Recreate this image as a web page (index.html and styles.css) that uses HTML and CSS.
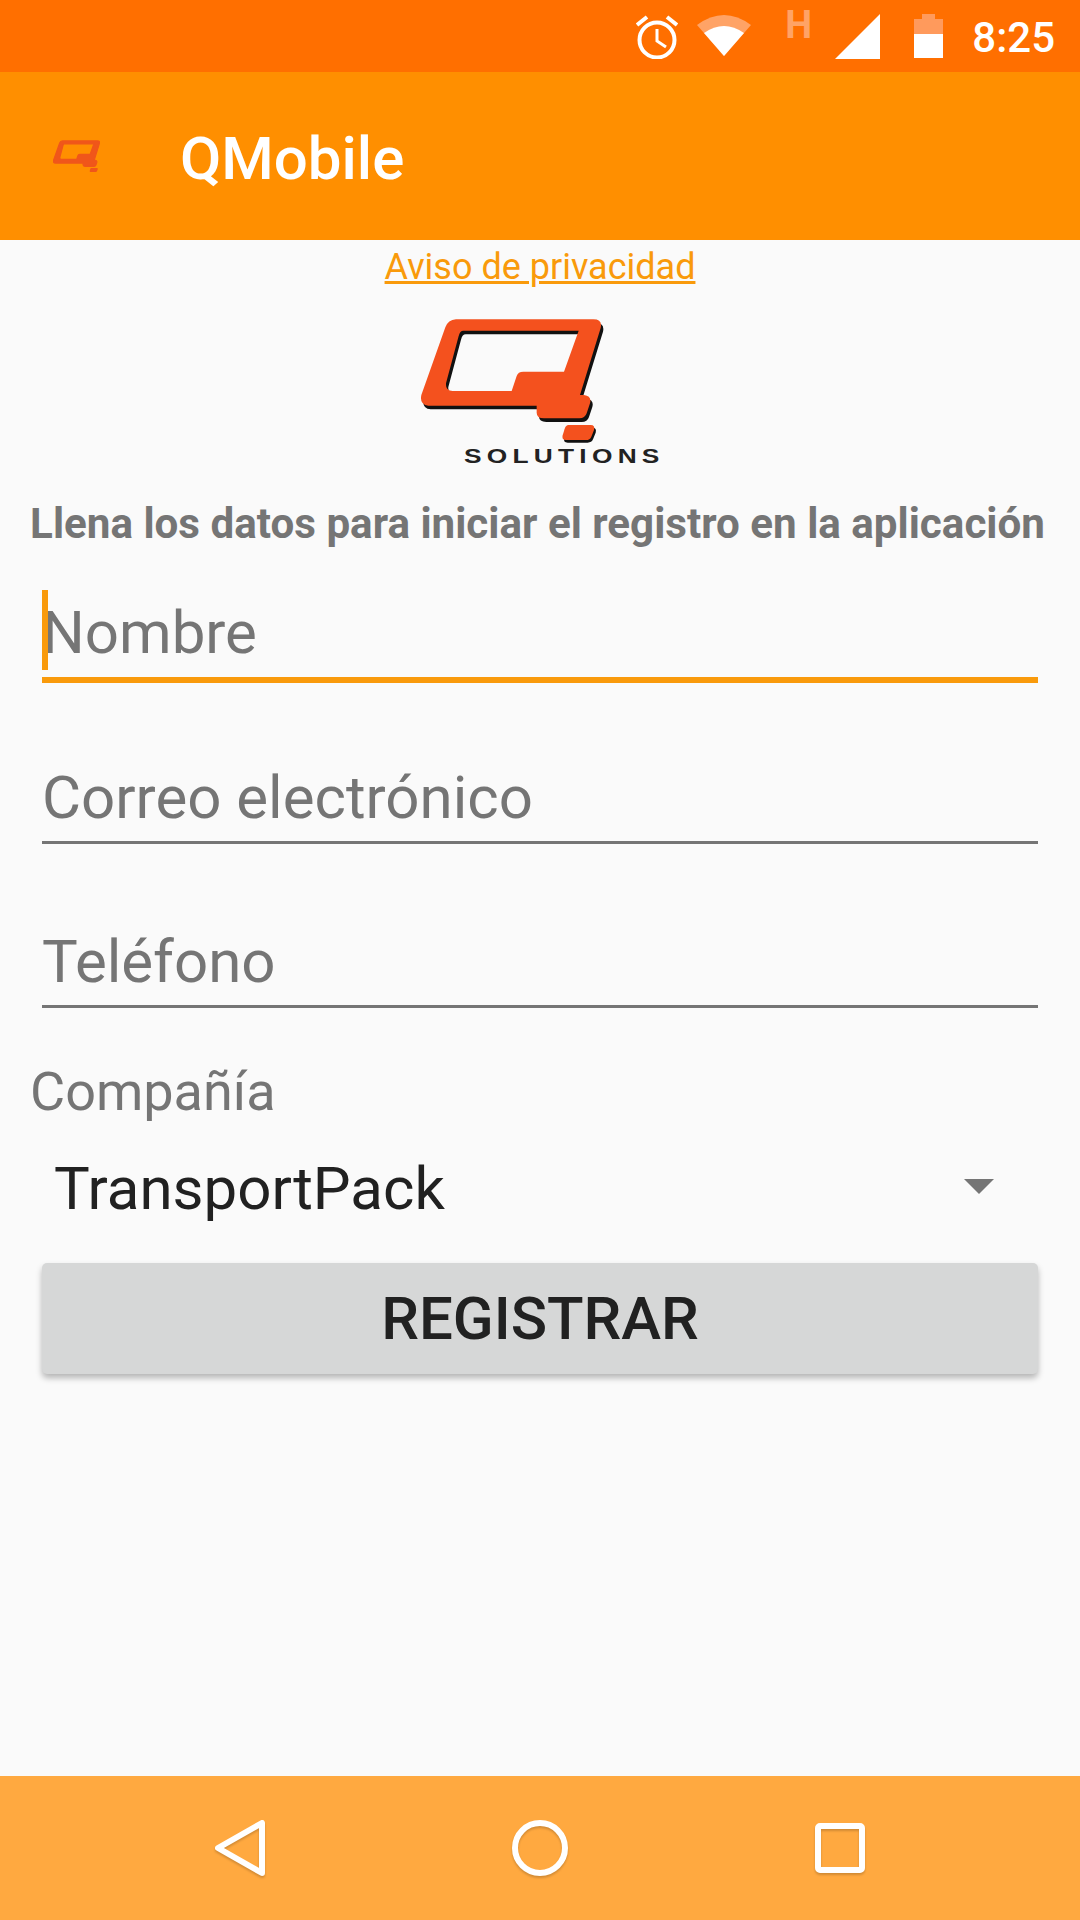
FILE: index.html
```html
<!DOCTYPE html>
<html lang="en">

<head>
    <meta charset="UTF-8">
    <title>QMobile</title>
    <link rel="stylesheet" href="styles.css">
</head>

<body>
    <svg class="defs" width="0" height="0">
        <defs>
            <path id="qShape" fill-rule="evenodd" d="M228 238H640Q668 238 662 264L600 465H612Q636 468 630 490L620 520Q615 535 598 535H492Q470 535 470 518V497H145Q118 495 124 465L196 262Q204 240 228 238ZM250 272Q240 272 236 288L198 430Q196 453 218 453H395L410 408Q414 395 430 395H552L596 272Z" />
            <path id="qDot" d="M565 555H632Q646 555 642 570L634 590Q630 600 618 600H558Q544 600 548 586L554 566Q558 555 565 555Z" />
        </defs>
    </svg>

    <div class="screen">
        <!-- barra de estado -->
        <div class="status-bar">
            <svg class="ic-alarm" width="42" height="44" viewBox="0 0 42 44">
                <circle cx="21" cy="25" r="17.5" fill="none" stroke="#fff" stroke-width="4" />
                <path d="M21 14V26L30 32" fill="none" stroke="#fff" stroke-width="3" />
                <path d="M1 10L11 2M41 10L31 2" stroke="#fff" stroke-width="4" />
            </svg>
            <svg class="ic-wifi" width="54" height="42" viewBox="0 0 54 42">
                <path d="M0 11Q27 -9 54 11L27 42Z" fill="#ffa366" />
                <path d="M7 19Q27 5 47 19L27 42Z" fill="#fff" />
            </svg>
            <span class="ic-h">H</span>
            <svg class="ic-signal" width="45" height="45" viewBox="0 0 45 45">
                <path d="M45 0V45H0Z" fill="#fff" />
            </svg>
            <svg class="ic-battery" width="29" height="44" viewBox="0 0 29 44">
                <path d="M0 5H8V0H21V5H29V20H0Z" fill="#ff9a5c" />
                <rect y="20" width="29" height="24" fill="#fff" />
            </svg>
            <span class="clock">8:25</span>
        </div>

        <!-- barra de app -->
        <div class="app-bar">
            <svg class="app-logo" width="47" height="33" viewBox="118 235 550 370">
                <use href="#qShape" fill="#f0561a" stroke="#f0561a" stroke-width="14" />
                <use href="#qDot" fill="#f0561a" />
            </svg>
            <h1>QMobile</h1>
        </div>

        <div class="content">
            <a class="privacy" href="#">Aviso de privacidad</a>

            <svg class="logo" width="240" height="150" viewBox="0 0 720 450">
                <g transform="translate(-120 -228)">
                    <use href="#qShape" fill="#111" transform="translate(7 11)" />
                    <use href="#qShape" fill="#f4511e" />
                    <use href="#qDot" fill="#111" transform="translate(5 8)" />
                    <use href="#qDot" fill="#f4511e" />
                </g>
                <text class="logo-text" x="132" y="440" textLength="602" lengthAdjust="spacingAndGlyphs">SOLUTIONS</text>
            </svg>

            <p class="intro">Llena los datos para iniciar el registro en la aplicación</p>

            <form class="form">
                <div class="field active">
                    <span class="caret"></span>
                    <input type="text" placeholder="Nombre">
                </div>
                <div class="field">
                    <input type="text" placeholder="Correo electrónico">
                </div>
                <div class="field">
                    <input type="text" placeholder="Teléfono">
                </div>

                <div class="label">Compañía</div>
                <div class="spinner">
                    <span>TransportPack</span>
                    <i class="arrow"></i>
                </div>
                <button class="btn" type="button">REGISTRAR</button>
            </form>
        </div>

        <!-- navegacion -->
        <div class="nav-bar">
            <svg width="54" height="56" viewBox="0 0 54 56">
                <path d="M48 3V53L4 28Z" fill="none" stroke="#fff" stroke-width="6" stroke-linejoin="round" />
            </svg>
            <svg width="56" height="56" viewBox="0 0 56 56">
                <circle cx="28" cy="28" r="25" fill="none" stroke="#fff" stroke-width="6" />
            </svg>
            <svg class="nav-recent" width="50" height="50" viewBox="0 0 50 50">
                <rect x="3" y="3" width="44" height="44" rx="2" fill="none" stroke="#fff" stroke-width="6" />
            </svg>
        </div>
    </div>
</body>

</html>
```

FILE: styles.css
```css
* {
    margin: 0;
    padding: 0;
    box-sizing: border-box;
}

body {
    background: #fafafa;
    font-family: Roboto, "Noto Sans", sans-serif;
}

.defs {
    display: block;
    height: 0;
}

.screen {
    width: 1080px;
    height: 1920px;
    display: flex;
    flex-direction: column;
    overflow: hidden;
}

.status-bar {
    height: 72px;
    flex: none;
    background: #ff6f00;
    display: flex;
    justify-content: flex-end;
    align-items: flex-start;
    padding-right: 25px;
    color: #fff;
}

.ic-alarm {
    margin-top: 15px;
}

.ic-wifi {
    margin: 14px 0 0 19px;
}

.ic-h {
    margin: 4px 0 0 34px;
    width: 25px;
    font-size: 38px;
    line-height: 42px;
    font-weight: 700;
    color: #ffa366;
}

.ic-signal {
    margin: 14px 0 0 25px;
}

.ic-battery {
    margin: 14px 0 0 34px;
}

.clock {
    margin: 14px 0 0 29px;
    font-size: 42px;
    line-height: 48px;
    font-weight: 500;
}

.app-bar {
    height: 168px;
    flex: none;
    background: #ff8f00;
    display: flex;
    align-items: center;
    padding-left: 53px;
}

.app-logo {
    flex: none;
}

.app-bar h1 {
    margin: 4px 0 0 80px;
    color: #fff;
    font-size: 60px;
    font-weight: 500;
}

.content {
    flex: 1;
    padding: 0 42px;
    display: flex;
    flex-direction: column;
    align-items: center;
}

.privacy {
    height: 54px;
    line-height: 54px;
    font-size: 36px;
    color: #f99a0b;
}

.logo {
    display: block;
    margin-top: 22px;
    flex: none;
}

.logo-text {
    font-family: "Liberation Sans", sans-serif;
    font-weight: 700;
    font-size: 60px;
    letter-spacing: 12px;
    fill: #222;
}

.intro {
    margin-top: 28px;
    width: 1080px;
    padding-right: 5px;
    line-height: 60px;
    text-align: center;
    font-size: 42.15px;
    font-weight: 700;
    color: #757575;
}

.form {
    width: 100%;
}

.field {
    position: relative;
    height: 96px;
    margin-top: 68px;
    border-bottom: 3px solid #757575;
}

.field.active {
    margin-top: 33px;
    border-bottom: 6px solid #f99a0b;
}

.field.active + .field {
    margin-top: 65px;
}

.field input {
    display: block;
    width: 100%;
    height: 100%;
    padding-top: 5px;
    border: 0;
    outline: 0;
    background: none;
    font-family: inherit;
    font-size: 60px;
    color: #757575;
}

.field.active input {
    padding-top: 0;
}

.field input::placeholder {
    color: #757575;
    opacity: 1;
}

.caret {
    position: absolute;
    left: 0;
    top: 3px;
    width: 6px;
    height: 80px;
    background: #f99a0b;
}

.label {
    margin: 49px 0 0 -12px;
    font-size: 54px;
    line-height: 70px;
    color: #757575;
}

.spinner {
    height: 118px;
    margin-top: 2px;
    padding: 0 44px 0 12px;
    display: flex;
    justify-content: space-between;
    align-items: center;
    font-size: 60px;
    color: #212121;
}

.arrow {
    width: 0;
    height: 0;
    margin-bottom: 4px;
    border-left: 15px solid transparent;
    border-right: 15px solid transparent;
    border-top: 15px solid #757575;
}

.btn {
    display: block;
    width: 100%;
    height: 111px;
    margin-top: 16px;
    border: 0;
    border-radius: 5px;
    background: #d6d7d7;
    box-shadow: 0 4px 6px rgba(0, 0, 0, 0.28);
    font-family: inherit;
    font-size: 60px;
    font-weight: 500;
    color: #212121;
}

.nav-bar {
    height: 144px;
    flex: none;
    background: #ffa940;
    display: flex;
    align-items: center;
    padding-left: 214px;
    gap: 244px;
}

.nav-bar svg {
    filter: drop-shadow(0 2px 1px rgba(0, 0, 0, 0.18));
}

.nav-recent {
    margin-left: 3px;
}
```
